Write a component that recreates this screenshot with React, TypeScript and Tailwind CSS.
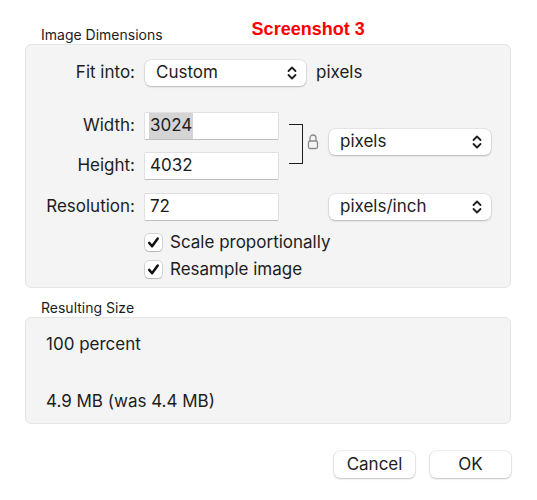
import React from 'react'

const font = { fontFamily: 'Inter, "Liberation Sans", sans-serif' }

function Chevrons() {
  return (
    <svg width="10" height="16" viewBox="0 0 10 16" fill="none" stroke="#1f1f1f" strokeWidth="1.8" strokeLinecap="round" strokeLinejoin="round">
      <path d="M1.5 6 L5 2.5 L8.5 6" />
      <path d="M1.5 10 L5 13.5 L8.5 10" />
    </svg>
  )
}

function Select({ value, className }: { value: string; className: string }) {
  return (
    <div
      className={`flex h-[26px] items-center justify-between rounded-[6px] bg-white pl-[11px] pr-[9px] text-[17px] text-[#1d1d1d] shadow-[0_0_0_0.5px_rgba(0,0,0,0.12),0_1px_2px_rgba(0,0,0,0.2)] ${className}`}
    >
      <span>{value}</span>
      <Chevrons />
    </div>
  )
}

function Field({ value, selected }: { value: string; selected?: boolean }) {
  return (
    <div className="flex h-[26px] w-[133px] items-center bg-white pl-[4px] text-[17px] text-[#1d1d1d] shadow-[0_0_0_0.5px_rgba(0,0,0,0.15),0_1px_0_rgba(0,0,0,0.15)]">
      <span className={selected ? 'bg-[#d4d4d4] px-[1px]' : 'px-[1px]'}>{value}</span>
    </div>
  )
}

function Check({ label }: { label: string }) {
  return (
    <div className="flex h-[17px] items-center gap-[8px]">
      <div className="flex h-[17px] w-[17px] items-center justify-center rounded-[4px] bg-white shadow-[0_0_0_0.5px_rgba(0,0,0,0.25),0_1px_1px_rgba(0,0,0,0.15)]">
        <svg width="13" height="13" viewBox="0 0 12 12" fill="none" stroke="#111" strokeWidth="2.3" strokeLinecap="round" strokeLinejoin="round">
          <path d="M2 6.4 L4.7 9.5 L9.9 2.3" />
        </svg>
      </div>
      <span className="text-[17px] text-[#1d1d1d]">{label}</span>
    </div>
  )
}

function Label({ text }: { text: string }) {
  return <div className="w-[109px] shrink-0 text-right text-[17px] text-[#1d1d1d]">{text}</div>
}

export default function App() {
  return (
    <div className="h-[500px] w-[537px] bg-white pl-[25px] pr-[26px]" style={font}>
      <div className="flex h-[44px] items-end">
        <div className="pl-[16px] pb-[2px] text-[14px] leading-none text-[#1d1d1d]">Image Dimensions</div>
        <div
          className="mb-[6px] ml-[89px] text-[18px] font-bold leading-none text-[#ff0000]"
          style={{ fontFamily: '"Liberation Sans", Arial, sans-serif' }}
        >
          Screenshot 3
        </div>
      </div>

      <div className="rounded-[6px] border border-[#e4e4e4] bg-[#f4f4f4] pt-[15px] pb-[9px]">
        <div className="flex h-[26px] items-center gap-[10px]">
          <Label text="Fit into:" />
          <Select value="Custom" className="w-[161px]" />
          <span className="text-[17px] text-[#1d1d1d]">pixels</span>
        </div>

        <div className="mt-[27px] flex items-start">
          <div className="flex flex-col gap-[14px]">
            <div className="flex h-[26px] items-center gap-[10px]">
              <Label text="Width:" />
              <Field value="3024" selected />
            </div>
            <div className="flex h-[26px] items-center gap-[10px]">
              <Label text="Height:" />
              <Field value="4032" />
            </div>
          </div>
          <div className="ml-[11px] mt-[11px] h-[40px] w-[14px] border-y-[1.5px] border-r-[1.5px] border-[#1d1d1d]" />
          <div className="ml-[4px] mt-[20px]">
            <svg width="12" height="17" viewBox="0 0 12 17" fill="none" stroke="#8a8a8a" strokeWidth="1.3">
              <path d="M3 8 V5 a3 3 0 0 1 6 0 V8" />
              <rect x="1.5" y="8" width="9" height="7.5" rx="1.5" />
            </svg>
          </div>
          <Select value="pixels" className="ml-[10px] mt-[16px] w-[162px]" />
        </div>

        <div className="mt-[15px] flex h-[26px] items-center gap-[10px]">
          <Label text="Resolution:" />
          <Field value="72" />
          <Select value="pixels/inch" className="ml-[41px] w-[162px]" />
        </div>

        <div className="ml-[119px] mt-[14px] flex flex-col gap-[10px]">
          <Check label="Scale proportionally" />
          <Check label="Resample image" />
        </div>
      </div>

      <div className="flex h-[29px] items-end pb-[2px] pl-[16px] text-[14px] leading-none text-[#1d1d1d]">Resulting Size</div>
      <div className="h-[107px] rounded-[6px] border border-[#e4e4e4] bg-[#f4f4f4] pl-[20px] pt-[14px] text-[17px] text-[#1d1d1d]">
        <div>100 percent</div>
        <div className="mt-[31px]">4.9 MB (was 4.4 MB)</div>
      </div>

      <div className="mt-[27px] flex justify-end gap-[15px]">
        <button className="h-[27px] w-[81px] rounded-[6px] bg-white text-[17px] text-[#1d1d1d] shadow-[0_0_0_0.5px_rgba(0,0,0,0.12),0_1px_2px_rgba(0,0,0,0.2)]">
          Cancel
        </button>
        <button className="h-[27px] w-[81px] rounded-[6px] bg-white text-[17px] text-[#1d1d1d] shadow-[0_0_0_0.5px_rgba(0,0,0,0.12),0_1px_2px_rgba(0,0,0,0.2)]">
          OK
        </button>
      </div>
    </div>
  )
}
